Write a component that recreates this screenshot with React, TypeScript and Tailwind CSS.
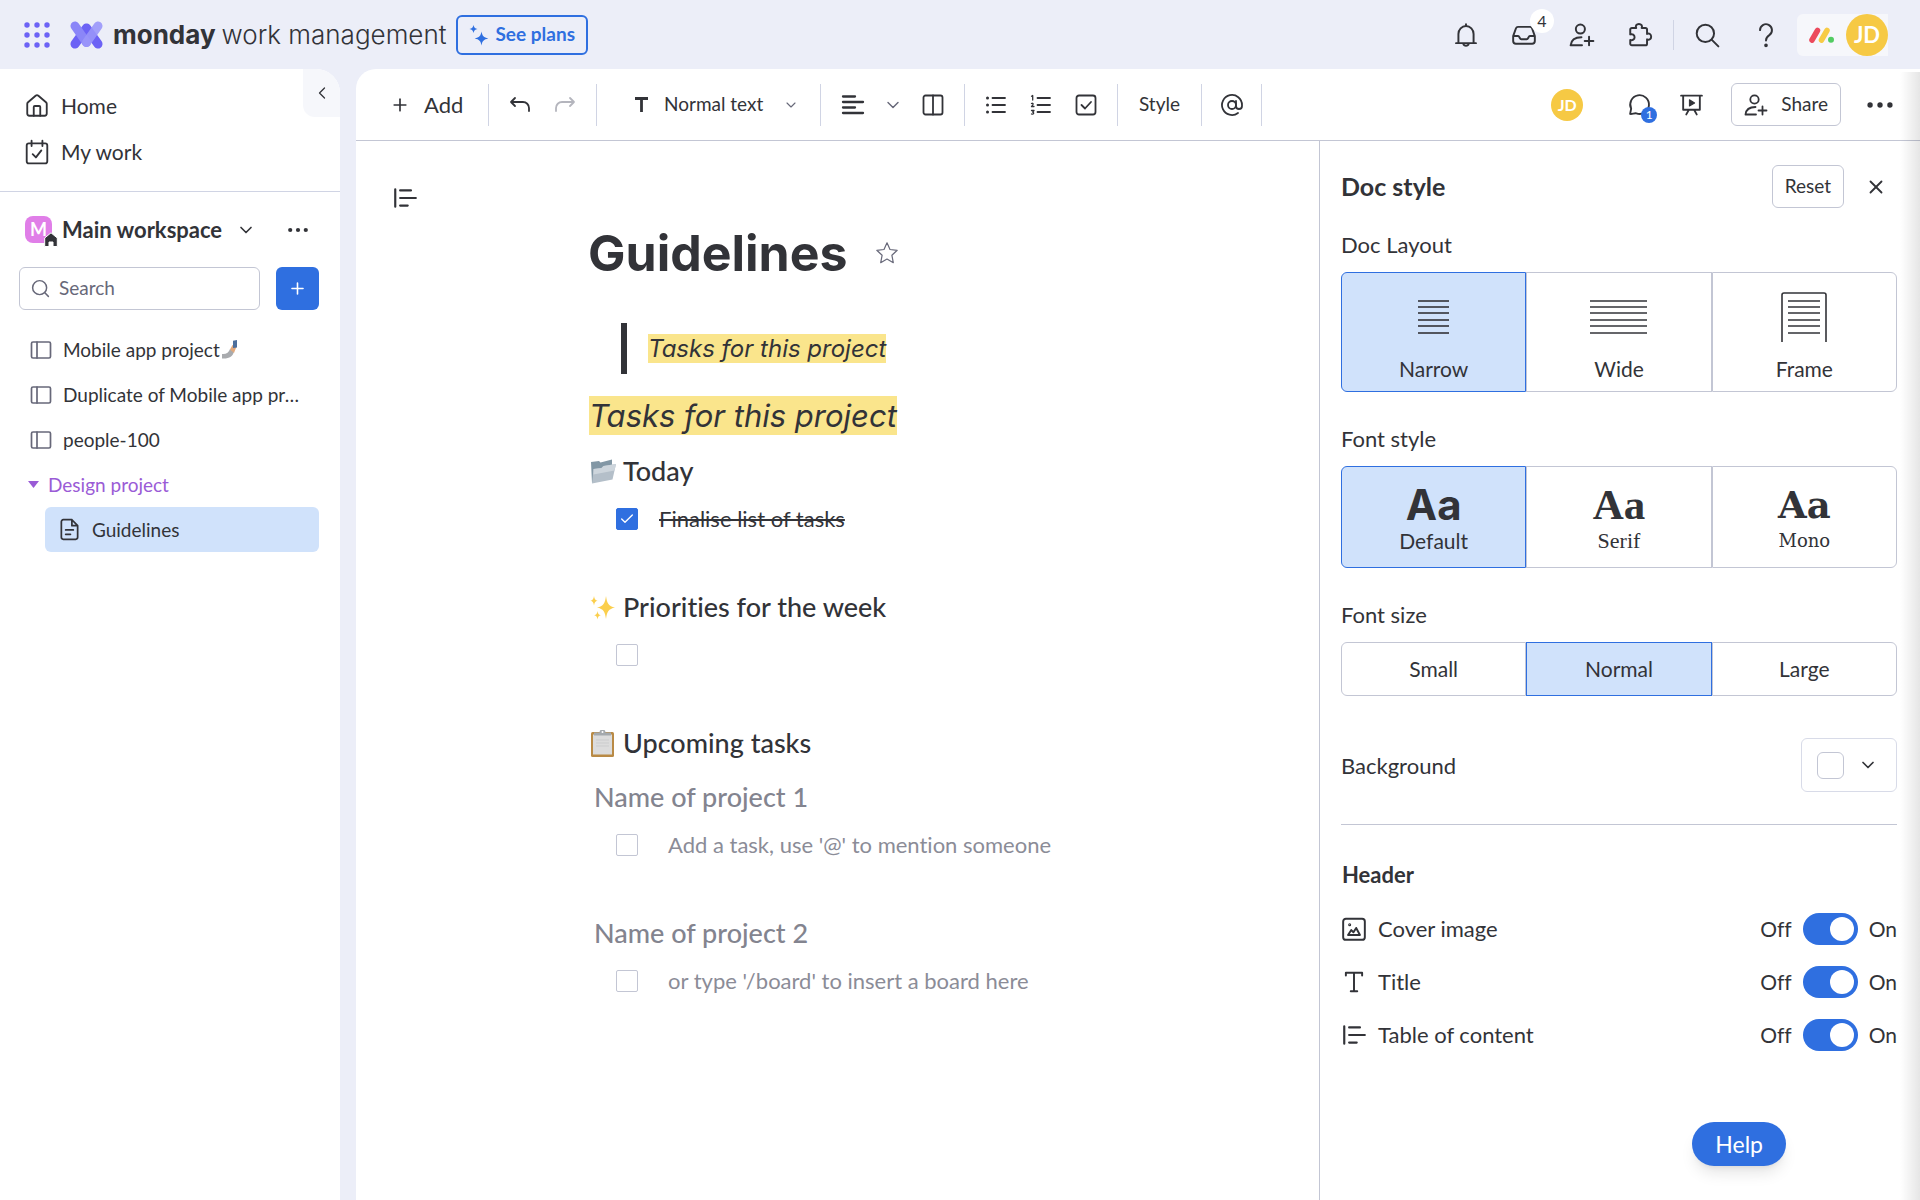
import type { ReactNode, SVGProps } from 'react'
import { AtSign, Check, ChevronDown, ChevronLeft, House, Plus, Search, X } from 'lucide-react'

const Icon = ({ children, size = 24, ...props }: { children: ReactNode; size?: number } & SVGProps<SVGSVGElement>) => (
  <svg
    width={size}
    height={size}
    viewBox="0 0 24 24"
    fill="none"
    stroke="currentColor"
    strokeWidth={1.8}
    strokeLinecap="round"
    strokeLinejoin="round"
    aria-hidden="true"
    {...props}
  >
    {children}
  </svg>
)

const PersonPlusIcon = ({ size = 26 }: { size?: number }) => (
  <Icon size={size}>
    <circle cx="10.5" cy="6.5" r="4.2" />
    <path d="M11.5 14C6 14 2 16.5 1.500 21.500H12M18.500 13.500v8M14.500 17.500h8" />
  </Icon>
)

const TocIcon = () => (
  <Icon size={26} strokeWidth={2}>
    <path d="M3 4v16M7.500 5h10M7.500 12h14.500M7.500 19h7" />
  </Icon>
)

const BoardIcon = () => (
  <Icon size={24} stroke="#676879" strokeWidth={1.7} className="shrink-0">
    <rect x="2.5" y="4" width="19" height="16" rx="1.5" />
    <path d="M8 4v16" />
  </Icon>
)

const DotsIcon = ({ size = 24 }: { size?: number }) => (
  <Icon size={size} fill="currentColor" stroke="none">
    <circle cx="3.5" cy="12" r="2.3" />
    <circle cx="12" cy="12" r="2.3" />
    <circle cx="20.5" cy="12" r="2.3" />
  </Icon>
)

const WorkLogo = () => (
  <svg width="33" height="28" viewBox="0 0 33 28" fill="none" strokeLinecap="round" aria-hidden="true">
    <path d="M5 23 16.500 7M28 23 16.500 7" stroke="#6c62f5" strokeWidth="9" />
    <path d="M5 5 16.500 21.500" stroke="#8b86f8" strokeWidth="9" />
    <path d="M28 5 16.500 21.500" stroke="#9a96fa" strokeWidth="9" opacity="0.9" />
  </svg>
)

const Tool = ({ label, children }: { label: string; children: ReactNode }) => (
  <button type="button" aria-label={label} className="flex size-7 items-center justify-center">
    {children}
  </button>
)

const Divider = () => <div className="h-[42px] w-px bg-[#d0d4e4]" />

const Header = () => (
  <header className="flex h-[69px] shrink-0 items-center justify-between pr-8 pl-6">
    <div className="flex items-center">
      <button type="button" aria-label="Products" className="mr-5 text-[#6c62f5]">
        <svg width="26" height="26" viewBox="0 0 26 26" fill="currentColor" aria-hidden="true">
          {[3, 13, 23].map((y) => [3, 13, 23].map((x) => <circle key={`${x}-${y}`} cx={x} cy={y} r="2.7" />))}
        </svg>
      </button>
      <a href="#home" className="flex items-center gap-2.5">
        <WorkLogo />
        <span className="flex gap-1.5 font-[Inter,sans-serif] text-[26px] leading-8 whitespace-nowrap">
          <b className="font-bold">monday</b>
          <span className="font-light">work management</span>
        </span>
      </a>
      <button
        type="button"
        className="ml-2.5 flex h-10 items-center gap-1.5 rounded-md border-2 border-[#2f6fe0] px-[11px] text-[19px] font-bold whitespace-nowrap text-[#2f6fe0]"
      >
        <svg width="20" height="22" viewBox="0 0 20 22" fill="currentColor" aria-hidden="true">
          <path d="M12.500 7.500c.8 4.500 2.200 6 6.800 7-4.600 1-6 2.400-6.800 7-.8-4.600-2.200-6-6.800-7 4.600-1 6-2.500 6.800-7ZM4.500 1c.5 2.500 1.400 3.500 4 4-2.600.5-3.500 1.500-4 4-.5-2.500-1.400-3.500-4-4 2.600-.5 3.500-1.500 4-4Z" />
        </svg>
        See plans
      </button>
    </div>

    <div className="flex items-center">
      <div className="flex items-center gap-[30px]">
        <Tool label="Notifications">
          <Icon size={26}>
            <path d="M12 2v1.500M5 19.500v-8.500a7 7.300 0 0 1 14 0v8.500M2.800 19.500h18.400M9.500 20a2.600 2.600 0 0 0 5 0" />
          </Icon>
        </Tool>
        <div className="relative">
          <Tool label="Inbox">
            <Icon size={26}>
              <path d="M6.500 4.500h11a2 2 0 0 1 1.900 1.300L22 13v4.500a2.500 2.500 0 0 1-2.500 2.500h-15A2.500 2.500 0 0 1 2 17.500V13l2.600-7.200a2 2 0 0 1 1.900-1.300ZM2 13h4.500c1.500 0 1.500 3 3 3h5c1.500 0 1.500-3 3-3H22" />
            </Icon>
          </Tool>
          <span className="absolute -top-3 left-5 flex size-6 items-center justify-center rounded-full bg-white text-[16px]">4</span>
        </div>
        <Tool label="Invite members">
          <PersonPlusIcon />
        </Tool>
        <Tool label="Apps">
          <Icon size={26}>
            <path d="M3 8.500V7a1.500 1.500 0 0 1 1.500-1.500H8.500C7.500 3.500 8.800 1.800 11 1.800s3.500 1.700 2.500 3.700H17A1.500 1.500 0 0 1 18.500 7v4c2-1 3.800.3 3.800 2.500s-1.800 3.500-3.800 2.500v4a1.500 1.500 0 0 1-1.500 1.500H4.500A1.500 1.500 0 0 1 3 20v-3.500c2 .8 4-.5 4-2.500s-2-3.300-4-2.500Z" />
          </Icon>
        </Tool>
      </div>
      <div className="mx-[19px] h-[30px] w-px bg-[#d0d4e4]" />
      <div className="flex items-center gap-[31px]">
        <Tool label="Search everything">
          <Icon size={26}>
            <circle cx="10.5" cy="10.5" r="8" />
            <path d="m16.500 16.500 6 6" />
          </Icon>
        </Tool>
        <Tool label="Help center">
          <Icon size={26}>
            <path d="M6.500 7.500a5.500 5.500 0 1 1 8.800 4.400C13 13.500 12 14.300 12 17" />
            <circle cx="12" cy="21.5" r="0.8" fill="currentColor" />
          </Icon>
        </Tool>
      </div>
      <button type="button" aria-label="Profile" className="ml-[17px] flex items-center gap-3 rounded-l-md bg-[#f6f7fb] pl-3">
        <svg width="25" height="16" viewBox="0 0 25 16" fill="none" strokeLinecap="round" aria-hidden="true">
          <path d="M3 13 8.500 3.500" stroke="#ec4a5c" strokeWidth="5.5" />
          <path d="M12.500 13 18 3.500" stroke="#f7cb45" strokeWidth="5.5" />
          <circle cx="22" cy="12.8" r="3" fill="#52cc62" />
        </svg>
        <span className="flex size-[42px] items-center justify-center rounded-full bg-[#f6c944] text-[22px] font-bold text-white">JD</span>
      </button>
    </div>
  </header>
)

const boards = ['Mobile app project', 'Duplicate of Mobile app project', 'people-100']

const Sidebar = () => (
  <aside className="relative w-[340px] shrink-0 rounded-tr-3xl bg-white">
    <button
      type="button"
      aria-label="Collapse navigation"
      className="absolute top-0 right-0 flex h-12 w-[37px] items-center justify-center rounded-tr-3xl rounded-bl-xl bg-[#f6f7fb]"
    >
      <ChevronLeft size={20} strokeWidth={1.5} />
    </button>
    <nav className="border-b border-[#d0d4e4] pt-[14px] pb-4 text-[21px] leading-[46px]">
      <a href="#home" className="flex items-center gap-[11px] pl-6">
        <House size={26} strokeWidth={1.7} />
        Home
      </a>
      <a href="#my-work" className="flex items-center gap-[11px] pl-6">
        <Icon size={26} strokeWidth={1.7}>
          <rect x="2.5" y="4" width="19" height="18.5" rx="2" />
          <path d="M7 1.500v5M17 1.500v5M8 14l3 3 5-6.500" />
        </Icon>
        My work
      </a>
    </nav>

    <div className="flex h-[75px] items-center justify-between pr-2 pl-[25px]">
      <button type="button" className="flex items-center text-[22px] font-bold whitespace-nowrap">
        <span className="relative mr-[10px] flex size-[27px] items-center justify-center rounded-lg bg-[#e07ee8] text-[18px] text-white">
          M
          <svg width="14" height="15" viewBox="0 0 14 15" className="absolute -right-1.5 -bottom-1" aria-hidden="true">
            <path d="M7 .8 13.300 6v8.500H9V10H5v4.500H.7V6Z" fill="#323338" stroke="#fff" strokeWidth="1" />
          </svg>
        </span>
        Main workspace
        <ChevronDown size={20} strokeWidth={2} className="ml-3.5" />
      </button>
      <button type="button" aria-label="Workspace options" className="mr-[23px]">
        <DotsIcon size={22} />
      </button>
    </div>

    <div className="flex gap-4 pr-[21px] pl-[19px]">
      <label className="flex h-[43px] w-[241px] items-center gap-2 rounded-md border border-[#c3c6d4] px-2.5">
        <Search size={21} strokeWidth={1.7} className="shrink-0 text-[#676879]" />
        <input type="text" aria-label="Search" placeholder="Search" className="w-full text-[19px] outline-none placeholder:text-[#676879]" />
      </label>
      <button type="button" aria-label="Add item" className="flex h-[43px] flex-1 items-center justify-center rounded-md bg-[#2f6fe0] text-white">
        <Plus size={19} />
      </button>
    </div>

    <nav className="mt-[17px] pr-[21px] text-[19px] leading-[45px]">
      {boards.map((name, i) => (
        <a key={name} href="#board" className="flex h-[45px] items-center gap-[10px] pr-4 pl-[29px]">
          <BoardIcon />
          <span className="truncate">{name}</span>
          {i === 0 && (
            <svg width="16" height="20" viewBox="0 0 16 20" className="-ml-2 shrink-0" role="img" aria-label="Selfie">
              <path d="M0 14c4 .500 7-1.500 8-5l4 2.500c-1 5-5 7.500-12 7Z" fill="#a9abae" />
              <path d="m8 9.500 2.500-4.500 4 1.500-2.500 6.500Z" fill="#e0a87c" />
              <path d="m11 .8 4-.8v7.500l-4 .500Z" fill="#4d6f9c" />
            </svg>
          )}
        </a>
      ))}
      <button type="button" aria-expanded="true" className="flex h-[45px] items-center gap-[9px] pl-7 text-[#9a5bd6]">
        <svg width="11" height="7" viewBox="0 0 11 7" fill="currentColor" aria-hidden="true">
          <path d="M0 0h11L5.500 7Z" />
        </svg>
        Design project
      </button>
      <a href="#guidelines" aria-current="page" className="ml-[45px] flex h-[45px] items-center gap-[11px] rounded-md bg-[#d0e2fb] pl-[13px]">
        <Icon size={23}>
          <path d="M14.500 1.800H5.500a2 2 0 0 0-2 2v16.400a2 2 0 0 0 2 2h13a2 2 0 0 0 2-2V8ZM14.500 1.800V8h6M8 12.500h8M8 17h5" />
        </Icon>
        Guidelines
      </a>
    </nav>
  </aside>
)

const Toolbar = () => (
  <div className="flex h-[72px] shrink-0 items-center justify-between border-b border-[#c3c6d4] pr-[26px] pl-8">
    <div className="flex items-center">
      <button type="button" className="flex w-[100px] items-center gap-3.5 pl-0.5 text-[22px]">
        <Plus size={20} strokeWidth={2} />
        Add
      </button>
      <Divider />
      <div className="flex w-[107px] justify-center gap-[17px]">
        <Tool label="Undo">
          <Icon size={24}>
            <path d="M7 5 3 9l4 4M3 9h12a6 6 0 0 1 6 6v3" />
          </Icon>
        </Tool>
        <button type="button" aria-label="Redo" disabled className="flex size-7 items-center justify-center text-[#b4b5bd]">
          <Icon size={24}>
            <path d="m17 5 4 4-4 4M21 9H9a6 6 0 0 0-6 6v3" />
          </Icon>
        </button>
      </div>
      <Divider />
      <label className="relative flex w-[223px] items-center pl-[38px] text-[19px]">
        <svg width="13" height="15" viewBox="0 0 13 15" fill="none" stroke="currentColor" strokeWidth="2.8" aria-hidden="true">
          <path d="M0 1.500h13M6.500 1.500V15" />
        </svg>
        <select aria-label="Text style" className="ml-4 w-[145px] appearance-none bg-transparent outline-none">
          <option>Normal text</option>
        </select>
        <ChevronDown size={16} strokeWidth={1.7} className="pointer-events-none absolute right-[21px] text-[#676879]" />
      </label>
      <Divider />
      <div className="flex w-[143px] items-center justify-between pr-[17px] pl-[18px]">
        <Tool label="Align">
          <Icon size={24} strokeWidth={2.3}>
            <path d="M2 3.500h12M2 9h20M2 14.500h12M2 20h20" />
          </Icon>
        </Tool>
        <button type="button" aria-label="Alignment options" className="mx-2">
          <ChevronDown size={20} strokeWidth={1.7} className="text-[#676879]" />
        </button>
        <Tool label="Layout">
          <Icon size={24}>
            <rect x="2.5" y="2.5" width="19" height="19" rx="2" />
            <path d="M12 2.500v19" />
          </Icon>
        </Tool>
      </div>
      <Divider />
      <div className="flex w-[152px] justify-center gap-[17px]">
        <Tool label="Bulleted list">
          <Icon size={24}>
            <path d="M8.500 5h12.500M8.500 12h12.500M8.500 19h12.500" />
            <path d="M3.500 5h.01M3.500 12h.01M3.500 19h.01" strokeWidth="3" />
          </Icon>
        </Tool>
        <Tool label="Numbered list">
          <Icon size={24}>
            <path d="M8.500 5h12.500M8.500 12h12.500M8.500 19h12.500" />
            <path d="M2.500 3.200 3.700 2.500v4.500M2.500 10.500c1.500-.8 2.800.5 0 3H5M2.500 17.500H5l-1.300 1.700c1.800.3 1 2.600-1.200 1.800" strokeWidth="1.3" />
          </Icon>
        </Tool>
        <Tool label="Checklist">
          <Icon size={24}>
            <rect x="2.5" y="2.5" width="19" height="19" rx="2.5" />
            <path d="m7.500 12 3.500 3.500 6-6.500" />
          </Icon>
        </Tool>
      </div>
      <Divider />
      <button type="button" className="w-[83px] text-[19px]">Style</button>
      <Divider />
      <div className="flex w-[59px] justify-center">
        <Tool label="Mention">
          <AtSign size={24} strokeWidth={1.8} />
        </Tool>
      </div>
      <Divider />
    </div>

    <div className="flex items-center">
      <span className="flex size-8 items-center justify-center rounded-full bg-[#f6c944] text-[16px] font-bold text-white">JD</span>
      <div className="relative mr-6 ml-[42px]">
        <Tool label="Comments">
          <Icon size={25}>
            <path d="M3 21l1-5a9 9 0 1 1 5 4.500C7 20 5 21.500 3 21Z" />
          </Icon>
        </Tool>
        <span className="absolute top-4 left-4 flex size-4 items-center justify-center rounded-full bg-[#2f6fe0] text-[12px] text-white">1</span>
      </div>
      <Tool label="Present">
        <Icon size={25}>
          <path d="M2 3.500h20M4 3.500v13.500h16V3.500M9.500 17 7 21.500M14.500 17l2.500 4.500" />
          <path d="m10 7.500 5 3-5 3Z" fill="currentColor" strokeWidth="1" />
        </Icon>
      </Tool>
      <button type="button" className="ml-[26px] flex h-[43px] items-center gap-[13px] rounded-md border border-[#c3c6d4] px-3 text-[19px]">
        <PersonPlusIcon size={24} />
        Share
      </button>
      <button type="button" aria-label="More options" className="ml-[25px]">
        <DotsIcon size={28} />
      </button>
    </div>
  </div>
)

const Task = ({ id, label, placeholder, checked }: { id: string; label?: string; placeholder?: string; checked?: boolean }) => (
  <div className="flex h-[42px] items-center pl-[28px]">
    <span className="relative flex">
      <input
        id={id}
        type="checkbox"
        aria-label={label || placeholder || 'New task'}
        defaultChecked={checked}
        className="size-[22px] appearance-none rounded-xs border border-[#c3c6d4] checked:border-[#2f6fe0] checked:bg-[#2f6fe0]"
      />
      {checked && <Check size={16} strokeWidth={2} className="pointer-events-none absolute top-[3px] left-[3px] text-white" />}
    </span>
    {label && <label htmlFor={id} className="ml-[21px] text-[22px] leading-7 whitespace-nowrap line-through">{label}</label>}
    {placeholder && <label htmlFor={id} className="ml-[30px] text-[22px] leading-7 whitespace-nowrap text-[#8b8c97]">{placeholder}</label>}
  </div>
)

const SectionTitle = ({ icon, children }: { icon: ReactNode; children: ReactNode }) => (
  <h2 className="flex h-[54px] items-center gap-1.5 pl-0.5 text-[27px] font-medium">
    {icon}
    {children}
  </h2>
)

const Editor = () => (
  <main className="grid min-w-0 flex-1 grid-cols-[1fr_499px_1fr] content-start">
    <div className="pt-11 pl-9">
      <button type="button" aria-label="Table of content" className="flex">
        <TocIcon />
      </button>
    </div>
    <article>
      <div className="flex items-center gap-[27px] pt-[80px]">
        <h1 className="font-[Inter,sans-serif] text-[50px] leading-[64px] font-bold">Guidelines</h1>
        <button type="button" aria-label="Add to favorites">
          <Icon size={24} stroke="#676879" strokeWidth={1.2}>
            <path d="m12 1.800 3 6.700 7.200.8-5.300 5 1.400 7.400L12 18l-6.300 3.700 1.400-7.400-5.300-5 7.200-.8Z" />
          </Icon>
        </button>
      </div>
      <blockquote className="mt-[38px] ml-[33px] flex h-[51px] items-center border-l-6 border-[#323338] pl-[21px] font-[Inter,sans-serif] text-[24px] leading-[29px] italic">
        <mark className="bg-[#fae58c] text-inherit">Tasks for this project</mark>
      </blockquote>
      <p className="mt-[22px] flex pl-px font-[Inter,sans-serif] text-[31px] leading-[39px] italic">
        <mark className="bg-[#fae58c] text-inherit">Tasks for this project</mark>
      </p>
      <div className="mt-[9px]">
        <SectionTitle
          icon={
            <svg width="27" height="27" viewBox="0 0 27 27" role="img" aria-label="Folder">
              <path d="M1 4 9 3l1.500 1.500L22 1.500V9L2 25Z" fill="#8297a5" />
              <path d="m3.500 11 8-1 2-2L26 6l-3.500 15.500L2 25.500Z" fill="#b4bfc9" />
              <path d="m3.500 11 8-1 2-2L26 6l-1.500 6.500-21 4Z" fill="#cdd5dc" />
            </svg>
          }
        >
          Today
        </SectionTitle>
        <Task id="finalise" label="Finalise list of tasks" checked />
      </div>
      <div className="mt-10">
        <SectionTitle
          icon={
            <svg width="27" height="27" viewBox="0 0 27 27" fill="#fbcf4d" role="img" aria-label="Sparkles">
              <path d="M16 2c1 7.500 2.500 10 9 11.500C18.500 15 17 17.500 16 25c-1-7.500-2.500-10-9-11.500C13.500 12 15 9.500 16 2ZM4 2c.5 3 1.200 4.200 3.500 4.700C5.200 7.200 4.500 8.500 4 11.500 3.500 8.500 2.800 7.200.5 6.700 2.800 6.200 3.500 5 4 2ZM7.500 17c.4 2.600 1.200 3.800 3.300 4.300-2.100.5-2.900 1.700-3.300 4.300-.4-2.600-1.200-3.800-3.300-4.300 2.100-.5 2.900-1.700 3.300-4.300Z" />
            </svg>
          }
        >
          Priorities for the week
        </SectionTitle>
        <Task id="priority" />
      </div>
      <div className="mt-10">
        <SectionTitle
          icon={
            <svg width="27" height="27" viewBox="0 0 27 27" role="img" aria-label="Clipboard">
              <rect x="1" y="2" width="23" height="25" rx="1.5" fill="#b98a45" />
              <rect x="3" y="4.5" width="19" height="20" fill="#dcdcdc" />
              <path d="M6 10h13M6 13h13M6 16h13" stroke="#cbcccd" strokeWidth="1" />
              <path d="M4 2.500h5.500a3 3 0 0 1 6 0H21v3H4Z" fill="#a4a9ad" />
              <circle cx="12.5" cy="2" r="1" fill="#fff" />
            </svg>
          }
        >
          Upcoming tasks
        </SectionTitle>
        <h3 className="flex h-[54px] items-center pl-1.5 text-[27px] font-medium text-[#83848f]">Name of project 1</h3>
        <Task id="project-1" placeholder="Add a task, use '@' to mention someone" />
      </div>
      <div className="mt-10">
        <h3 className="flex h-[54px] items-center pl-1.5 text-[27px] font-medium text-[#83848f]">Name of project 2</h3>
        <Task id="project-2" placeholder="or type '/board' to insert a board here" />
      </div>
    </article>
  </main>
)

type Option = { name: string; art?: ReactNode; className?: string }

const LayoutLines = ({ width }: { width: number }) => (
  <svg width={width} height="50" viewBox={`0 0 ${width} 50`} stroke="#323338" strokeWidth="1.6" aria-hidden="true">
    {[9, 15, 21, 28, 34, 41].map((y) => (
      <path key={y} d={`M0 ${y}h${width}`} />
    ))}
  </svg>
)

const FrameLines = () => (
  <svg width="46" height="50" viewBox="0 0 46 50" fill="none" stroke="#323338" strokeWidth="1.6" aria-hidden="true">
    <path d="M1 50V3a2 2 0 0 1 2-2h40a2 2 0 0 1 2 2v47" />
    <path d="M7 9h32M7 15h32M7 21h32M7 28h32M7 34h32M7 41h32" />
  </svg>
)

const Segmented = ({ name, title, value, options, className }: { name: string; title: string; value: string; options: Option[]; className: string }) => (
  <fieldset>
    <legend className="text-[22px] leading-[30px]">{title}</legend>
    <div className={`mt-3 grid grid-cols-3 ${className}`}>
      {options.map((o) => (
        <label
          key={o.name}
          className={`flex flex-col items-center justify-center border border-[#c3c6d4] leading-6 first:rounded-l-md last:rounded-r-md has-checked:border-[#2f6fe0] has-checked:bg-[#d0e2fb] ${o.className || 'text-[21px]'}`}
        >
          <input type="radio" name={name} value={o.name} defaultChecked={o.name === value} className="sr-only" />
          {o.art}
          {o.name}
        </label>
      ))}
    </div>
  </fieldset>
)

const Toggle = ({ icon, label }: { icon: ReactNode; label: string }) => (
  <label className="flex h-[53px] items-center text-[21px]">
    {icon}
    <span className="ml-[11px] flex-1 text-[22px]">{label}</span>
    <span>Off</span>
    <span className="relative mx-[11px] flex">
      <input type="checkbox" role="switch" aria-label={label} defaultChecked className="peer h-8 w-[55px] appearance-none rounded-full bg-[#c3c6d4] checked:bg-[#2f6fe0]" />
      <span className="pointer-events-none absolute top-1 left-1 size-6 rounded-full bg-white peer-checked:left-[27px]" />
    </span>
    <span>On</span>
  </label>
)

const StylePanel = () => (
  <aside className="w-[601px] shrink-0 border-l border-[#c3c6d4] pr-[23px] pl-[21px]">
    <div className="flex items-center pt-6">
      <h2 className="flex-1 text-[25px] font-bold">Doc style</h2>
      <button type="button" className="h-[43px] rounded-md border border-[#c3c6d4] px-3 text-[19px]">Reset</button>
      <button type="button" aria-label="Close" className="mr-2.5 ml-[21px]">
        <X size={22} strokeWidth={2} />
      </button>
    </div>

    <div className="mt-[22px] flex flex-col gap-[32px]">
      <Segmented
        name="layout"
        title="Doc Layout"
        value="Narrow"
        className="h-[120px]"
        options={[
          { name: 'Narrow', art: <LayoutLines width={31} />, className: 'gap-[15px] pt-2 text-[21px]' },
          { name: 'Wide', art: <LayoutLines width={57} />, className: 'gap-[15px] pt-2 text-[21px]' },
          { name: 'Frame', art: <FrameLines />, className: 'gap-[15px] pt-2 text-[21px]' },
        ]}
      />
      <Segmented
        name="font"
        title="Font style"
        value="Default"
        className="h-[102px]"
        options={[
          { name: 'Default', art: <b className="font-[Inter,sans-serif] text-[42px] leading-[48px]">Aa</b> },
          { name: 'Serif', art: <b className="text-[43px] leading-[48px]">Aa</b>, className: "font-['Liberation_Serif',serif] text-[22px]" },
          { name: 'Mono', art: <b className="text-[37px] leading-[48px]">Aa</b>, className: "font-['DejaVu_Serif',serif] text-[18px]" },
        ]}
      />
      <Segmented name="size" title="Font size" value="Normal" className="h-[54px]" options={[{ name: 'Small' }, { name: 'Normal' }, { name: 'Large' }]} />
    </div>

    <div className="mt-[42px] flex items-center justify-between border-b border-[#c3c6d4] pb-8 text-[22px]">
      <span id="background-label">Background</span>
      <button type="button" aria-labelledby="background-label" className="flex h-[54px] w-24 items-center gap-[14px] rounded-md border border-[#d8dbe8] pl-[15px]">
        <span className="size-[27px] rounded-md border border-[#c3c6d4]" />
        <ChevronDown size={20} strokeWidth={2} />
      </button>
    </div>

    <h3 className="mt-[35px] mb-3 pl-px text-[22px] leading-[30px] font-bold">Header</h3>
    <Toggle
      label="Cover image"
      icon={
        <Icon size={26}>
          <rect x="2" y="2.5" width="20" height="19.5" rx="2.5" />
          <path d="m6.500 17.500 3-4.500 2 2 2.500-4 3.500 6.500Z" />
          <circle cx="8" cy="8" r="0.5" />
        </Icon>
      }
    />
    <Toggle
      label="Title"
      icon={
        <Icon size={26}>
          <path d="M4.500 6V3.500h15V6M12 3.500v17M9 20.500h6" />
        </Icon>
      }
    />
    <Toggle label="Table of content" icon={<TocIcon />} />
  </aside>
)

const App = () => {
  return (
    <div className="relative flex h-screen flex-col overflow-hidden bg-[#eceef8] font-[Lato,sans-serif] text-[#323338] [font-variant-ligatures:none]">
      <Header />
      <div className="flex min-h-0 flex-1 gap-4">
        <Sidebar />
        <div className="flex min-w-0 flex-1 flex-col rounded-tl-[20px] bg-white">
          <Toolbar />
          <div className="flex min-h-0 flex-1">
            <Editor />
            <StylePanel />
          </div>
        </div>
      </div>
      <button type="button" className="absolute right-[134px] bottom-[34px] h-11 rounded-full bg-[#2f6fe0] px-[23px] text-[23px] text-white shadow-lg">
        Help
      </button>
      <div className="pointer-events-none absolute top-[72px] right-0 bottom-0 w-5 bg-linear-to-l from-black/10 to-transparent" />
    </div>
  )
}

export default App
